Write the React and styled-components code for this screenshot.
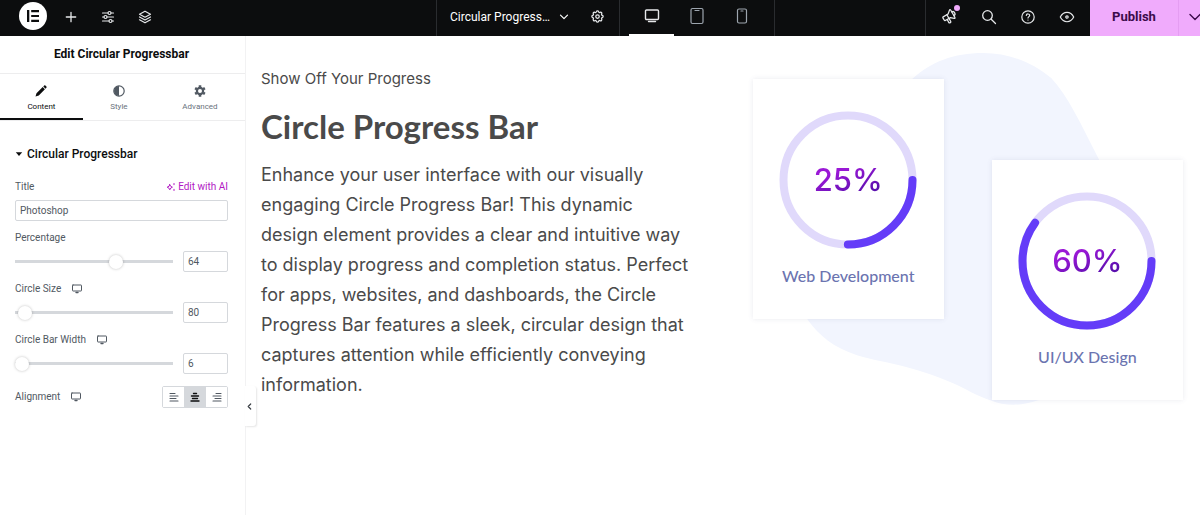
import React, { useState } from "react";
import styled, { createGlobalStyle, css } from "styled-components";

const GlobalStyle = createGlobalStyle`
  * {
    box-sizing: border-box;
  }
  body {
    margin: 0;
    background: #fff;
    font-family: Roboto, "Liberation Sans", sans-serif;
    overflow-x: hidden;
  }
  button, input {
    font-family: inherit;
  }
`;

const Page = styled.div`
  display: flex;
  flex-direction: column;
  min-height: 100vh;
`;

/* ---------- top bar ---------- */

const TopBar = styled.header`
  overflow: hidden;
  background: #0c0d0e;
`;

// the publish menu runs a little past the right edge
const TopBarRow = styled.div`
  display: flex;
  width: calc(100% + 11px);
  height: 36px;
`;

const Side = styled.div`
  flex: 1;
  display: flex;
  justify-content: ${(props) => (props.end ? "flex-end" : "flex-start")};
`;

const BarButton = styled.button`
  display: flex;
  align-items: center;
  justify-content: center;
  width: ${(props) => props.w || 37}px;
  height: 33px;
  padding: 0;
  border: 0;
  background: none;
  color: ${(props) => (props.dim ? "#9da5ae" : "#e6e8ea")};
  position: relative;
  cursor: pointer;
`;

const Logo = styled.button`
  display: flex;
  align-items: center;
  justify-content: center;
  width: 28px;
  height: 28px;
  margin: 2px 5px 0 19px;
  padding: 0;
  border: 0;
  border-radius: 50%;
  background: #fff;
  color: #0c0d0e;
`;

const DocGroup = styled.div`
  display: flex;
  width: 183px;
  border-left: 1px solid #2a2c2f;
`;

const DocButton = styled.button`
  display: flex;
  align-items: center;
  gap: 8px;
  height: 33px;
  padding: 0 9px 0 13px;
  border: 0;
  background: none;
  color: #fff;
  font-size: 12px;
  white-space: nowrap;
`;

const Devices = styled.div`
  display: flex;
  width: 156px;
  padding-left: 9px;
  border-left: 1px solid #2a2c2f;
  border-right: 1px solid #2a2c2f;
`;

const DeviceButton = styled(BarButton)`
  width: 45px;
  height: 36px;
  padding-bottom: 4px;
  ${(props) =>
    props.active &&
    css`
      box-shadow: inset 0 -2px 0 #fff;
    `}
`;

const Tools = styled.div`
  display: flex;
  padding: 0 4px;
  border-left: 1px solid #2a2c2f;
`;

const Dot = styled.span`
  position: absolute;
  top: 5px;
  right: 9px;
  width: 6px;
  height: 6px;
  border-radius: 50%;
  background: #f0abfc;
`;

const Publish = styled.button`
  width: 88px;
  padding: 0 0 4px;
  border: 0;
  background: #f0abfc;
  color: #3b0a4a;
  font-size: 13px;
  font-weight: 700;
`;

const PublishMore = styled.button`
  display: flex;
  align-items: center;
  justify-content: center;
  width: 33px;
  padding: 0 0 3px;
  border: 0;
  border-left: 1px solid #e59df2;
  background: #f0abfc;
  color: #3b0a4a;
`;

/* ---------- panel ---------- */

const Body = styled.div`
  flex: 1;
  display: flex;
`;

const Panel = styled.aside`
  position: relative;
  flex: 0 0 246px;
  border-right: 1px solid #f2f2f3;
  background: #fff;
`;

const PanelTitle = styled.h2`
  margin: 0;
  padding-right: 2px;
  font-size: 12px;
  font-weight: 700;
  line-height: 37px;
  text-align: center;
  color: #0c0d0e;
  border-bottom: 1px solid #ededee;
`;

const Tabs = styled.nav`
  display: flex;
  height: 47px;
  border-bottom: 1px solid #ededee;
`;

const Tab = styled.button`
  flex: 1 1 auto;
  display: flex;
  flex-direction: column;
  align-items: center;
  gap: 4px;
  padding: 11px 0 0;
  border: 0;
  border-bottom: 2px solid ${(props) => (props.active ? "#0c0d0e" : "transparent")};
  background: none;
  color: ${(props) => (props.active ? "#0c0d0e" : "#69727d")};
  font-size: 8px;
  line-height: 12px;
`;

const TabIcon = styled.span`
  display: flex;
  color: ${(props) => (props.active ? "#0c0d0e" : "#515962")};
`;

const SectionToggle = styled.button`
  display: flex;
  align-items: center;
  gap: 4px;
  width: 100%;
  height: 58px;
  padding: 8px 15px 0;
  border: 0;
  background: none;
  color: #0c0d0e;
  font-size: 12px;
  font-weight: 500;
`;

const Controls = styled.div`
  display: flex;
  flex-direction: column;
  gap: 9px;
  padding: 0 17px 0 15px;
`;

const Control = styled.div`
  display: flex;
  flex-direction: column;
  gap: 5px;
`;

const Row = styled.div`
  display: flex;
  align-items: center;
  justify-content: space-between;
`;

const LabelGroup = styled.div`
  display: flex;
  align-items: center;
  gap: 11px;
  height: 16px;
  color: #515962;
`;

const Label = styled.label`
  font-size: 10px;
  line-height: 16px;
  color: #515962;
`;

const AiButton = styled.button`
  display: flex;
  align-items: center;
  gap: 2px;
  padding: 0;
  border: 0;
  background: none;
  color: #b118c4;
  font-size: 10px;
  line-height: 16px;
`;

const TextInput = styled.input`
  width: ${(props) => (props.small ? "45px" : "100%")};
  height: 21px;
  padding: 0 4px;
  border: 1px solid #d5d8dc;
  border-radius: 2px;
  background: #fff;
  color: #515962;
  font-size: 10px;
`;

const Range = styled.input`
  -webkit-appearance: none;
  appearance: none;
  flex: 1;
  min-width: 0;
  height: 15px;
  margin: 0 3px 0 -7px;
  background: linear-gradient(#d5d8dc, #d5d8dc) center / calc(100% - 14px) 3px no-repeat;

  &::-webkit-slider-thumb {
    -webkit-appearance: none;
    width: 14px;
    height: 14px;
    border-radius: 50%;
    background: #fff;
    box-shadow: 0 0 3px rgba(0, 0, 0, 0.25);
  }
`;

const AlignRow = styled(Row)`
  padding-top: 3px;
`;

const AlignGroup = styled.div`
  display: flex;
  border: 1px solid #d5d8dc;
  border-radius: 2px;
`;

const AlignButton = styled.button`
  display: flex;
  align-items: center;
  justify-content: center;
  width: ${(props) => (props.active ? 22 : 21)}px;
  height: 20px;
  padding: 0;
  border: 0;
  background: ${(props) => (props.active ? "#d5d8dc" : "#fff")};
  color: ${(props) => (props.active ? "#0c0d0e" : "#515962")};
`;

const Collapse = styled.button`
  position: absolute;
  top: 350px;
  left: 100%;
  display: flex;
  align-items: center;
  justify-content: center;
  width: 11px;
  height: 40px;
  padding: 0 3px 0 0;
  border: 0;
  border-radius: 0 3px 3px 0;
  background: #fff;
  box-shadow: 1px 1px 2px rgba(0, 0, 0, 0.1);
  color: #3a3f45;
`;

/* ---------- canvas ---------- */

const Canvas = styled.main`
  flex: 1;
  display: grid;
  grid-template-columns: minmax(0, 8fr) minmax(0, 7fr);
  align-items: start;
  padding: 34px 17px 0 15px;
  color: #4a4a4a;
`;

const Intro = styled.section`
  font-family: Inter, sans-serif;
`;

const Eyebrow = styled.p`
  margin: 0;
  font-size: 15px;
  line-height: 18px;
`;

const Heading = styled.h1`
  margin: 16px 0 0;
  font-family: Lato, sans-serif;
  font-size: 33px;
  font-weight: 700;
  line-height: 44px;
`;

const Text = styled.p`
  margin: 12px 0 0;
  font-size: 18px;
  line-height: 30px;
`;

const Cards = styled.section`
  position: relative;
  display: grid;
  grid-template-columns: 1fr 1fr;
  gap: 48px;
  align-items: start;
  padding-top: 9px;
`;

const Blob = styled.svg`
  position: absolute;
  top: 9px;
  left: 0;
  width: 100%;
  overflow: visible;
`;

const Card = styled.article`
  position: relative;
  display: flex;
  flex-direction: column;
  align-items: center;
  height: 240px;
  margin-top: ${(props) => (props.lowered ? "81px" : "0")};
  padding-top: 32px;
  background: #fff;
  box-shadow: 0 0 5px rgba(80, 90, 130, 0.12);
`;

const Ring = styled.div`
  display: grid;
  place-items: center;

  > * {
    grid-area: 1 / 1;
  }
`;

const Value = styled.span`
  font-family: Inter, sans-serif;
  font-size: 31px;
  font-weight: 500;
  line-height: 36px;
  background: linear-gradient(160deg, #9a18d6 30%, #5a0fae 80%);
  -webkit-background-clip: text;
  background-clip: text;
  color: transparent;
`;

const CardTitle = styled.h3`
  margin: 15px 0 0;
  font-family: Lato, sans-serif;
  font-size: 16px;
  font-weight: 500;
  line-height: 24px;
  color: #6b74b0;
`;

const Icon = ({ size = 16, box = 24, sw = 2, children }) => (
  <svg
    width={size}
    height={size}
    viewBox={`0 0 ${box} ${box}`}
    fill="none"
    stroke="currentColor"
    strokeWidth={sw}
    strokeLinecap="round"
    strokeLinejoin="round"
    aria-hidden="true"
  >
    {children}
  </svg>
);

const MonitorIcon = () => (
  <Icon size={10} box={10} sw={1}>
    <rect x="0.5" y="1" width="9" height="6" rx="0.5" />
    <path d="M4 8.500h2" strokeWidth="1.400" />
  </Icon>
);

const AlignIcon = ({ type }) => {
  const lines = {
    left: "M1 1.5h5M1 4h8M1 6.500h6M1 9h8",
    center: "M3.5 1.5h3M1.5 4h7M2.5 6.500h5M1 9h8",
    right: "M4 1.5h5M1 4h8M3 6.500h6M1 9h8",
  };
  return (
    <Icon size={10} box={10} sw={type === "center" ? 1.4 : 1.1}>
      <path d={lines[type]} />
    </Icon>
  );
};

const Progress = ({ value }) => {
  const r = 64.5;
  const length = 2 * Math.PI * r;
  return (
    <Ring>
      <svg width="138" height="138" viewBox="0 0 138 138" fill="none" strokeWidth="8" aria-hidden="true">
        <circle cx="69" cy="69" r={r} stroke="#e0d9fb" />
        <circle
          cx="69"
          cy="69"
          r={r}
          stroke="#643cf8"
          strokeLinecap="round"
          strokeDasharray={`${(length * value) / 100} ${length}`}
        />
      </svg>
      <Value>{value}%</Value>
    </Ring>
  );
};

const SliderControl = ({ id, label, initial, max, responsive }) => {
  const [value, setValue] = useState(initial);
  return (
    <Control>
      <LabelGroup>
        <Label htmlFor={id}>{label}</Label>
        {responsive && <MonitorIcon />}
      </LabelGroup>
      <Row>
        <Range
          type="range"
          min="0"
          max={max}
          value={value}
          aria-label={label}
          onChange={(e) => setValue(e.target.value)}
        />
        <TextInput small id={id} value={value} onChange={(e) => setValue(e.target.value)} />
      </Row>
    </Control>
  );
};

const Header = () => (
  <TopBar>
    <TopBarRow>
      <Side>
        <Logo aria-label="Menu">
          <svg width="14" height="14" viewBox="0 0 14 14" fill="currentColor">
            <path d="M1 1h2.300v12H1zM5.200 1H13v2.200H5.200zM5.200 5.900H13v2.200H5.200zM5.200 10.800H13V13H5.200z" />
          </svg>
        </Logo>
        <BarButton aria-label="Add element">
          <Icon size={12} box={12} sw={1.3}>
            <path d="M6 1.300v9.400M1.300 6h9.400" />
          </Icon>
        </BarButton>
        <BarButton aria-label="Site settings">
          <Icon size={14} box={14} sw={1.2}>
            <path d="M1.500 3h5.400M10.100 3h2.400M1.500 7h1.400M6.100 7h6.400M1.500 11h6.400M11.100 11h1.400" />
            <circle cx="8.500" cy="3" r="1.500" />
            <circle cx="4.500" cy="7" r="1.500" />
            <circle cx="9.500" cy="11" r="1.500" />
          </Icon>
        </BarButton>
        <BarButton w={38} aria-label="Structure">
          <Icon size={14} box={14} sw={1.2}>
            <path d="M7 1.200 1.500 4.200 7 7.200l5.500-3zM1.500 7 7 10l5.500-3M1.500 9.800l5.500 3 5.500-3" />
          </Icon>
        </BarButton>
      </Side>
      <DocGroup>
        <DocButton>
          Circular Progress…
          <Icon size={12} box={12} sw={1.2}>
            <path d="m2.500 4.200 3.500 3.500 3.500-3.500" />
          </Icon>
        </DocButton>
        <BarButton aria-label="Page settings">
          <Icon size={15} box={24} sw={2}>
            <path d="M10.300 4.300c.4-1.800 3-1.800 3.400 0a1.700 1.700 0 0 0 2.600 1.100c1.500-1 3.300.8 2.400 2.400a1.700 1.700 0 0 0 1 2.500c1.800.5 1.800 3 0 3.400a1.700 1.700 0 0 0-1 2.600c.9 1.500-.9 3.300-2.400 2.400a1.700 1.700 0 0 0-2.600 1c-.4 1.800-3 1.800-3.400 0a1.700 1.700 0 0 0-2.600-1c-1.500.9-3.300-.9-2.400-2.400a1.700 1.700 0 0 0-1-2.600c-1.800-.4-1.800-2.900 0-3.400a1.700 1.700 0 0 0 1-2.500c-.9-1.600.9-3.400 2.400-2.400 1 .6 2.300.1 2.600-1.100z" />
            <circle cx="12" cy="12" r="2.800" />
          </Icon>
        </BarButton>
      </DocGroup>
      <Devices>
        <DeviceButton active aria-label="Desktop">
          <Icon size={16} box={16} sw={1.4}>
            <rect x="1.500" y="2" width="13" height="9.500" rx="1" />
            <path d="M4.500 13.500h7" />
          </Icon>
        </DeviceButton>
        <DeviceButton dim aria-label="Tablet">
          <Icon size={18} box={18} sw={1.2}>
            <rect x="3" y="1.500" width="12" height="15" rx="1.500" />
            <path d="M7 3.500h4" />
          </Icon>
        </DeviceButton>
        <DeviceButton dim aria-label="Mobile">
          <Icon size={16} box={16} sw={1.2}>
            <rect x="3.500" y="1" width="9" height="14" rx="1.500" />
            <path d="M7 3h2" />
          </Icon>
        </DeviceButton>
      </Devices>
      <Side end>
        <Tools>
          <BarButton w={39} aria-label="What's new">
            <Icon size={17} box={24} sw={1.8}>
              <g transform="rotate(-30 12 12)">
                <path d="M18 8a3 3 0 0 1 0 6M10 14v5a1 1 0 0 1-1 1H8a1 1 0 0 1-1-1v-5M10 8v6" />
                <path d="m12 8 4.500-3.800A.9.9 0 0 1 18 4.900v12.200a.9.900 0 0 1-1.500.7L12 14H4a1 1 0 0 1-1-1V9a1 1 0 0 1 1-1z" />
              </g>
            </Icon>
            <Dot />
          </BarButton>
          <BarButton w={39} aria-label="Finder">
            <Icon size={16} box={16} sw={1.3}>
              <circle cx="6.500" cy="6.500" r="4.800" />
              <path d="m10.200 10.200 4.300 4.300" />
            </Icon>
          </BarButton>
          <BarButton w={39} aria-label="Help">
            <Icon size={16} box={16} sw={1.2}>
              <circle cx="8" cy="8" r="6.200" />
              <path d="M6.300 6.400c.2-2 3.400-1.800 3.400 0C9.700 7.600 8 7.700 8 9M8 11v.1" />
            </Icon>
          </BarButton>
          <BarButton w={39} aria-label="Preview">
            <Icon size={16} box={16} sw={1.2}>
              <path d="M1.300 8C4.500 1.700 11.500 1.700 14.700 8c-3.200 6.300-10.200 6.300-13.400 0z" />
              <circle cx="8" cy="8" r="1.200" />
            </Icon>
          </BarButton>
        </Tools>
        <Publish>Publish</Publish>
        <PublishMore aria-label="Save options">
          <Icon size={12} box={12} sw={1.4}>
            <path d="m1 3.500 5 5 5-5" />
          </Icon>
        </PublishMore>
      </Side>
    </TopBarRow>
  </TopBar>
);

const EditorPanel = () => {
  const [title, setTitle] = useState("Photoshop");
  const [align, setAlign] = useState("center");

  return (
    <Panel>
      <PanelTitle>Edit Circular Progressbar</PanelTitle>
      <Tabs>
        <Tab active>
          <TabIcon active>
            <svg width="12" height="12" viewBox="0 0 12 12" fill="currentColor">
              <path d="M8.300 1.500 9.200.6q.6-.5 1.200 0l1 1q.5.600 0 1.200l-.9.9zM7.700 2.100l2.200 2.200-6.100 6.200L.5 11.500l1-3.300z" />
            </svg>
          </TabIcon>
          Content
        </Tab>
        <Tab>
          <TabIcon>
            <svg width="12" height="12" viewBox="0 0 12 12" fill="currentColor">
              <circle cx="6" cy="6" r="5.200" fill="none" stroke="currentColor" strokeWidth="1.200" />
              <path d="M6 1a5 5 0 0 0 0 10z" />
            </svg>
          </TabIcon>
          Style
        </Tab>
        <Tab>
          <TabIcon>
            <svg width="12" height="12" viewBox="0 0 12 12" fill="none" stroke="currentColor">
              <circle cx="6" cy="6" r="3.100" strokeWidth="2.200" />
              <path
                d="M6 .3v2M6 9.700v2M1.100 3.100l1.700 1M9.200 7.900l1.700 1M1.100 8.900l1.700-1M9.200 4.100l1.700-1"
                strokeWidth="2.600"
              />
            </svg>
          </TabIcon>
          Advanced
        </Tab>
      </Tabs>
      <SectionToggle>
        <svg width="8" height="8" viewBox="0 0 8 8" fill="currentColor">
          <path d="M.8 2.300h6.400L4 6z" />
        </svg>
        Circular Progressbar
      </SectionToggle>
      <Controls>
        <Control>
          <Row>
            <Label htmlFor="title">Title</Label>
            <AiButton>
              <Icon size={10} box={10} sw={1}>
                <path d="M3.800 2.600 4.700 4.300 6.400 5.200l-1.700.9-.9 1.700-.9-1.700-1.700-.9 1.700-.9zM8 1.500v1.200M8 7.300v1.200" />
              </Icon>
              Edit with AI
            </AiButton>
          </Row>
          <TextInput id="title" value={title} onChange={(e) => setTitle(e.target.value)} />
        </Control>
        <SliderControl id="percentage" label="Percentage" initial={64} max={100} />
        <SliderControl id="circle-size" label="Circle Size" initial={80} max={1250} responsive />
        <SliderControl id="bar-width" label="Circle Bar Width" initial={6} max={136} responsive />
        <AlignRow>
          <LabelGroup>
            <Label as="span">Alignment</Label>
            <MonitorIcon />
          </LabelGroup>
          <AlignGroup role="group" aria-label="Alignment">
            {["left", "center", "right"].map((type) => (
              <AlignButton key={type} active={align === type} aria-label={type} onClick={() => setAlign(type)}>
                <AlignIcon type={type} />
              </AlignButton>
            ))}
          </AlignGroup>
        </AlignRow>
      </Controls>
      <Collapse aria-label="Hide panel">
        <Icon size={7} box={7} sw={1.2}>
          <path d="M4.700 1 2.200 3.500 4.700 6" />
        </Icon>
      </Collapse>
    </Panel>
  );
};

const App = () => (
  <Page>
    <GlobalStyle />
    <Header />
    <Body>
      <EditorPanel />
      <Canvas>
        <Intro>
          <Eyebrow>Show Off Your Progress</Eyebrow>
          <Heading>Circle Progress Bar</Heading>
          <Text>
            Enhance your user interface with our visually
            <br />
            engaging Circle Progress Bar! This dynamic
            <br />
            design element provides a clear and intuitive way
            <br />
            to display progress and completion status. Perfect
            <br />
            for apps, websites, and dashboards, the Circle
            <br />
            Progress Bar features a sleek, circular design that
            <br />
            captures attention while efficiently conveying
            <br />
            information.
          </Text>
        </Intro>
        <Cards>
          <Blob viewBox="0 0 430 320" aria-hidden="true">
            <path
              d="M159 0C178-17 200-26 230-26C257-26 280-16 298-1C315 17 327 44 345 79C380 150 400 230 340 290C322 308 302 320 285 321C268 327 252 327 237 321C224 317 212 309 200 304C182 296 168 292 154 288C136 283 120 281 104 276C80 268 66 256 55 241C20 190 100 70 159 0Z"
              fill="#f2f5fe"
            />
          </Blob>
          <Card>
            <Progress value={25} />
            <CardTitle>Web Development</CardTitle>
          </Card>
          <Card lowered>
            <Progress value={60} />
            <CardTitle>UI/UX Design</CardTitle>
          </Card>
        </Cards>
      </Canvas>
    </Body>
  </Page>
);

export default App;
